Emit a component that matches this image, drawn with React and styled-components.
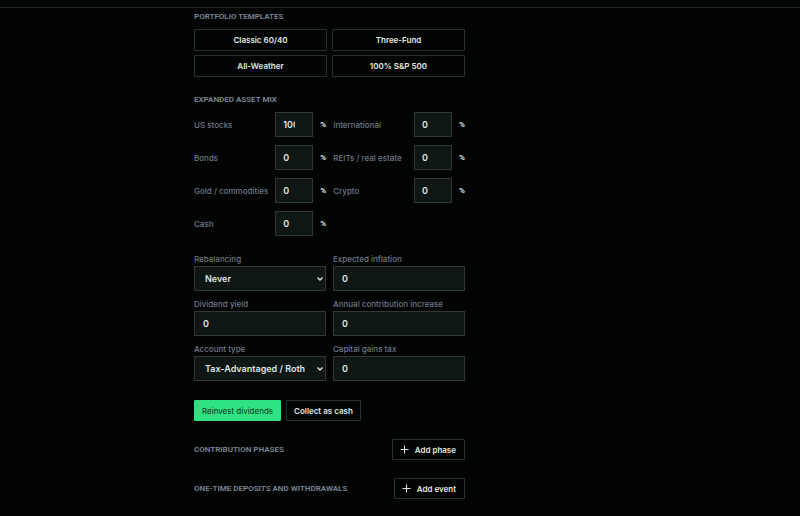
import React from "react";
import styled, { createGlobalStyle, css } from "styled-components";

const GlobalStyle = createGlobalStyle`
  *, *::before, *::after { box-sizing: border-box; }
  body {
    margin: 0;
    background: #010403;
    color: #dfe5e2;
    font-family: Inter, "Liberation Sans", sans-serif;
    font-size: 8px;
    line-height: 10px;
  }
  button, input, select { font: inherit; color: inherit; margin: 0; }
`;

const Page = styled.div`
  padding-top: 7px;
`;

const Content = styled.main`
  border-top: 1px solid #1f2523;
  padding: 4px 16px 16px 194px;
`;

const Panel = styled.form`
  display: flex;
  flex-direction: column;
  gap: 18px;
  max-width: 271px;
`;

const Section = styled.section`
  display: flex;
  flex-direction: column;
  gap: 8px;
`;

const Heading = styled.h2`
  margin: 0;
  font-family: Roboto, "Liberation Sans", sans-serif;
  font-size: 8px;
  line-height: 9px;
  font-weight: 600;
  text-transform: uppercase;
  color: #7d8697;
  white-space: nowrap;
`;

const TemplateGrid = styled.div`
  display: grid;
  grid-template-columns: 1fr 1fr;
  gap: 4px 5px;
`;

const Button = styled.button`
  display: inline-flex;
  align-items: center;
  justify-content: center;
  gap: 6px;
  height: ${(p) => (p.$tall ? "22px" : "21px")};
  padding: 0 ${(p) => (p.$icon ? "8px" : "7px")} 0 7px;
  border: 1px solid ${(p) => (p.$active ? "#2ee283" : "#29302d")};
  border-radius: 1px;
  background: ${(p) => (p.$active ? "#2ee283" : "transparent")};
  color: ${(p) => (p.$active ? "#07331c" : "#e3e8e5")};
  font-weight: ${(p) => (p.$active ? 400 : 600)};
  white-space: nowrap;
  cursor: pointer;
`;

const MixGrid = styled.div`
  display: grid;
  grid-template-columns: 1fr 1fr;
  gap: 8px 7px;
`;

const MixRow = styled.div`
  display: grid;
  grid-template-columns: 1fr 38px 6px;
  column-gap: 7px;
  align-items: center;
`;

const Label = styled.label`
  color: #6f7888;
  font-weight: 500;
  white-space: nowrap;
`;

const control = css`
  width: 100%;
  height: 25px;
  border: 1px solid #2f3835;
  border-radius: 0;
  background-color: #0f1714;
  font-size: 9px;
  font-weight: 600;
  outline: none;
`;

const Input = styled.input`
  ${control}
  padding: 0 ${(p) => (p.$compact ? "17px" : "8px")} 0 ${(p) => (p.$compact ? "7px" : "8px")};
`;

const Percent = styled.span`
  font-family: Roboto, "Liberation Sans", sans-serif;
  font-weight: 700;
`;

const FieldGrid = styled.div`
  display: grid;
  grid-template-columns: 1fr 1fr;
  gap: 8px 7px;
  padding-bottom: 1px;
`;

const Field = styled.div`
  display: flex;
  flex-direction: column;
  gap: 2px;
  min-width: 0;
`;

const SelectBox = styled.div`
  display: grid;
  align-items: center;

  > * { grid-area: 1 / 1; }
`;

const Select = styled.select`
  ${control}
  appearance: none;
  padding: 0 14px 0 10px;
`;

const Chevron = styled.svg`
  width: 6px;
  height: 4px;
  margin-right: 3px;
  justify-self: end;
  pointer-events: none;
`;

const Actions = styled.div`
  display: flex;
  gap: 5px;
`;

const HeadingRow = styled.div`
  display: flex;
  align-items: center;
  justify-content: space-between;
`;

const Plus = styled.svg`
  width: 9px;
  height: 9px;
`;

const templates = ["Classic 60/40", "Three-Fund", "All-Weather", "100% S&P 500"];

const assets = [
  ["us", "US stocks", "100"],
  ["intl", "International", "0"],
  ["bonds", "Bonds", "0"],
  ["reits", "REITs / real estate", "0"],
  ["gold", "Gold / commodities", "0"],
  ["crypto", "Crypto", "0"],
  ["cash", "Cash", "0"],
];

const fields = [
  { id: "rebalancing", label: "Rebalancing", options: ["Never", "Annually", "Quarterly"] },
  { id: "inflation", label: "Expected inflation" },
  { id: "dividend", label: "Dividend yield" },
  { id: "increase", label: "Annual contribution increase" },
  { id: "account", label: "Account type", options: ["Tax-Advantaged / Roth", "Taxable"] },
  { id: "tax", label: "Capital gains tax" },
];

const addable = [
  ["Contribution phases", "Add phase"],
  ["One-time deposits and withdrawals", "Add event"],
];

export default function App() {
  return (
    <Page>
      <GlobalStyle />
      <Content>
        <Panel onSubmit={(e) => e.preventDefault()}>
          <Section>
            <Heading>Portfolio templates</Heading>
            <TemplateGrid>
              {templates.map((name) => (
                <Button key={name} type="button" $tall>{name}</Button>
              ))}
            </TemplateGrid>
          </Section>

          <Section>
            <Heading>Expanded asset mix</Heading>
            <MixGrid>
              {assets.map(([id, label, value]) => (
                <MixRow key={id}>
                  <Label htmlFor={id}>{label}</Label>
                  <Input id={id} inputMode="decimal" defaultValue={value} $compact />
                  <Percent>%</Percent>
                </MixRow>
              ))}
            </MixGrid>
          </Section>

          <FieldGrid>
            {fields.map(({ id, label, options }) => (
              <Field key={id}>
                <Label htmlFor={id}>{label}</Label>
                {options ? (
                  <SelectBox>
                    <Select id={id}>
                      {options.map((o) => <option key={o}>{o}</option>)}
                    </Select>
                    <Chevron viewBox="0 0 6 4" fill="none" stroke="#e3e8e5" strokeWidth="1.4" aria-hidden="true">
                      <path d="M0.5 0.5 L3 3 L5.5 0.5" />
                    </Chevron>
                  </SelectBox>
                ) : (
                  <Input id={id} inputMode="decimal" defaultValue="0" />
                )}
              </Field>
            ))}
          </FieldGrid>

          <Actions>
            <Button type="button" $active aria-pressed="true">Reinvest dividends</Button>
            <Button type="button" aria-pressed="false">Collect as cash</Button>
          </Actions>

          {addable.map(([title, action]) => (
            <HeadingRow key={title}>
              <Heading>{title}</Heading>
              <Button type="button" $icon>
                <Plus viewBox="0 0 9 9" fill="none" stroke="currentColor" strokeWidth="1" aria-hidden="true">
                  <path d="M4.5 0.5v8M0.5 4.5h8" />
                </Plus>
                {action}
              </Button>
            </HeadingRow>
          ))}
        </Panel>
      </Content>
    </Page>
  );
}
